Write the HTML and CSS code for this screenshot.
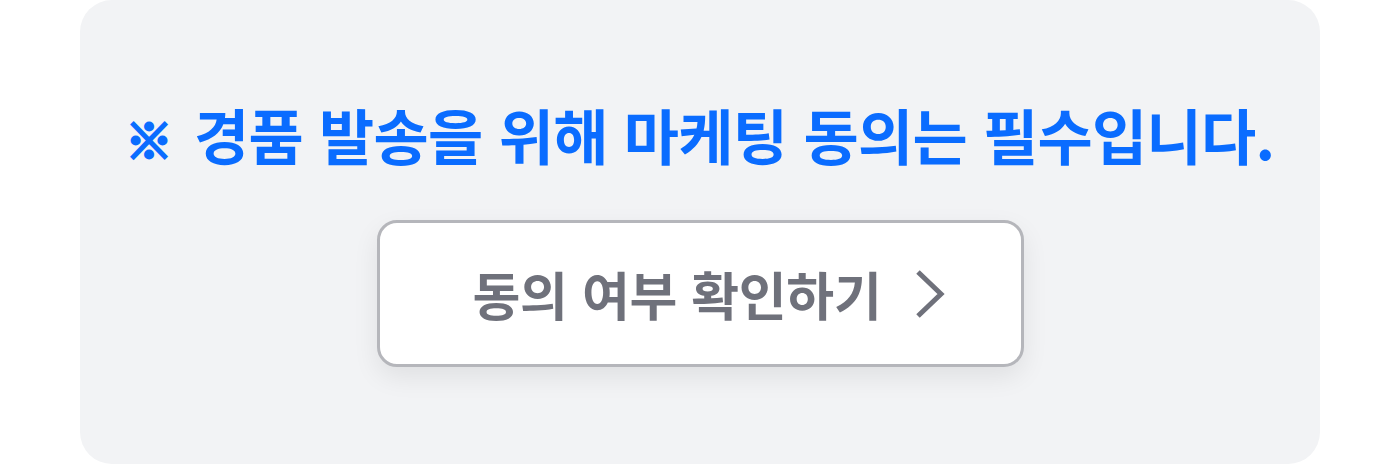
FILE: index.html
```html
<!DOCTYPE html>
<html lang="ko">
<head>
<meta charset="utf-8">
<title>마케팅 동의</title>
<link rel="stylesheet" href="styles.css">
</head>
<body>
<section class="card">
  <p class="notice"><span class="mark">※</span> 경품 발송을 위해 마케팅 동의는 필수입니다.</p>
  <button class="consent-btn" type="button">
    <span class="consent-label">동의 여부 확인하기</span>
    <svg class="chevron" width="30" height="48" viewBox="0 0 30 48" aria-hidden="true">
      <polyline points="3,2 26,24 3,46" fill="none" stroke="#6f717b" stroke-width="5" stroke-linejoin="miter" stroke-linecap="butt"/>
    </svg>
  </button>
</section>
</body>
</html>
```

FILE: styles.css
```css
html, body {
  margin: 0;
  padding: 0;
  background: #ffffff;
}

body {
  font-family: "Noto Sans CJK KR", "Noto Sans", sans-serif;
}

.card {
  box-sizing: border-box;
  margin: 0 80px;
  height: 464px;
  background: #f2f3f5;
  border-radius: 32px;
  display: flex;
  flex-direction: column;
  align-items: center;
  padding-top: 94px;
}

.notice {
  margin: 0;
  height: 80px;
  font-size: 60px;
  line-height: 80px;
  font-weight: 700;
  color: #0a6cff;
  letter-spacing: -0.7px;
  white-space: nowrap;
}

.mark {
  display: inline-block;
  font-size: 47px;
  line-height: 47px;
  -webkit-text-stroke: 3px #0a6cff;
  margin-right: 6px;
  vertical-align: 2px;
}

.consent-btn {
  box-sizing: border-box;
  margin-top: 46px;
  width: 647px;
  height: 147px;
  background: #ffffff;
  border: 3px solid #b5b6bb;
  border-radius: 20px;
  box-shadow: 0 10px 26px rgba(0, 0, 0, 0.08);
  display: flex;
  align-items: center;
  justify-content: center;
  gap: 34px;
  padding: 0 0 0 18px;
  font-family: inherit;
  cursor: pointer;
}

.consent-label {
  font-size: 52px;
  line-height: 64px;
  font-weight: 700;
  color: #6f717b;
  letter-spacing: -0.3px;
}

.chevron {
  display: block;
  flex: none;
}
```
